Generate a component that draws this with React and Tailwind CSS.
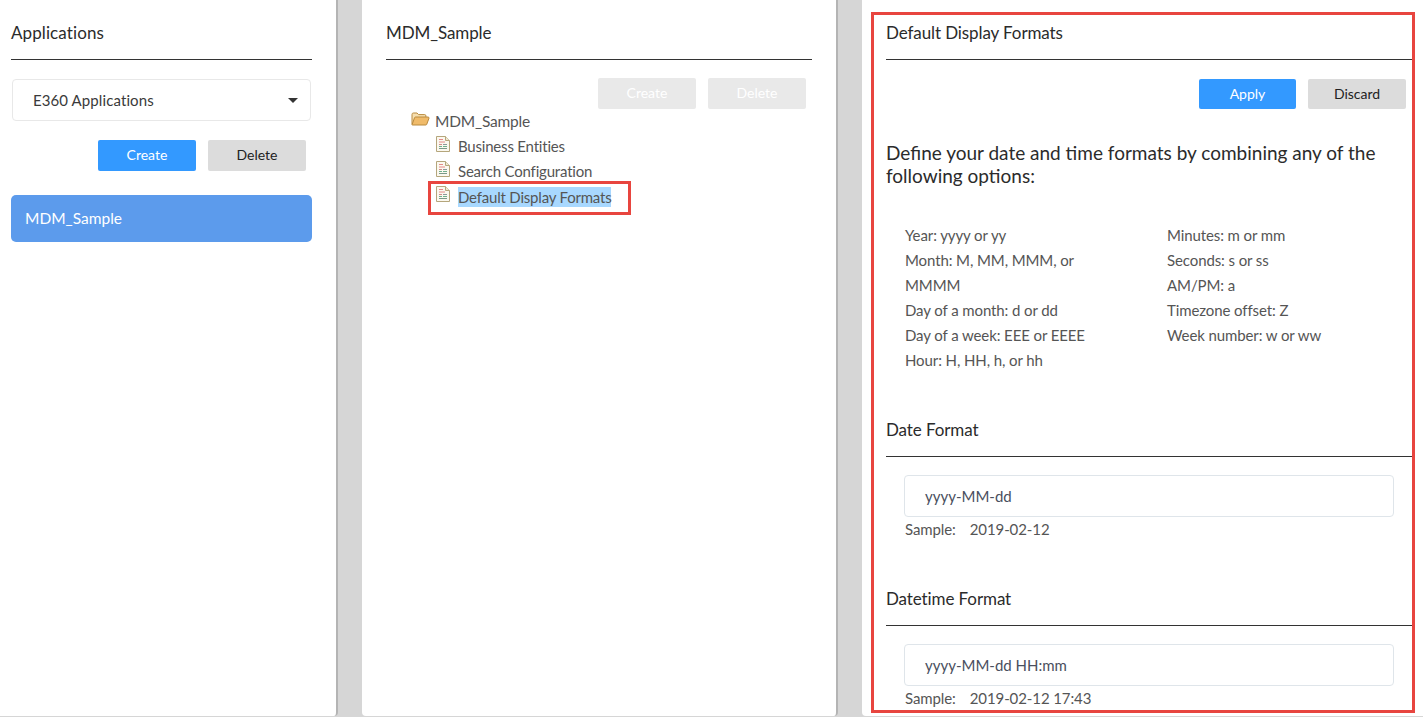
const font = "font-['Lato','Liberation_Sans',sans-serif]";

function FolderIcon() {
  return (
    <svg width="19" height="14" viewBox="0 0 19 14" className="shrink-0">
      <path d="M1 12.5V2.5C1 1.6 1.6 1 2.4 1H6l1.5 1.6h6.2c.7 0 1.2.5 1.2 1.2V5" fill="#f6dfb0" stroke="#b98a3e" strokeWidth="1" />
      <path d="M1 12.8 3.6 5.6c.2-.4.5-.6.9-.6h12.6c.7 0 1.1.6.9 1.2l-2.3 6.2c-.2.4-.5.6-.9.6H1.6z" fill="#f0bb6a" stroke="#b98a3e" strokeWidth="1" />
    </svg>
  );
}

function DocIcon() {
  return (
    <svg width="14" height="16" viewBox="0 0 14 16" className="shrink-0">
      <path d="M.5.5h9l4 4v11H.5z" fill="#fbf8ef" stroke="#b5a67c" strokeWidth="1" />
      <path d="M9.5.5v4h4" fill="#efe8d2" stroke="#b5a67c" strokeWidth="1" />
      <rect x="3" y="3" width="4" height="1" fill="#e58a8a" />
      <rect x="3" y="5.5" width="6" height="1" fill="#e58a8a" />
      <rect x="3" y="8" width="3" height="1" fill="#d08a8a" />
      <rect x="7" y="8" width="4" height="1" fill="#8a9a9a" />
      <rect x="3" y="10" width="3" height="1" fill="#6fae8c" />
      <rect x="7" y="10" width="4" height="1" fill="#6fae8c" />
      <rect x="3" y="12" width="8" height="1" fill="#7a9a8a" />
    </svg>
  );
}

function Btn({children, primary, disabled, size = 'w-[98px] h-[31px]'}) {
  const color = disabled
    ? 'bg-[#e9e9e9] text-white'
    : primary
      ? 'bg-[#3399ff] text-white'
      : 'bg-[#dcdcdc] text-[#222]';
  return (
    <button className={`pb-[2px] rounded-[2px] text-[14px] ${size} ${color}`}>{children}</button>
  );
}

function PanelTitle({children, spacing = 'tracking-[-0.1px]'}) {
  return (
    <div className={`h-[60px] flex items-center pt-[7px] border-b border-[#333] text-[17px] text-[#2b2b2b] ${spacing}`}>
      {children}
    </div>
  );
}

function TreeRow({children}) {
  return (
    <div className="h-[25px] flex items-center gap-[8px]">
      <div className="-mt-[5px]"><DocIcon /></div>
      {children}
    </div>
  );
}

function FormatField({title, value, sample}) {
  return (
    <div>
      <div className="h-[57px] flex items-end pb-[14px] border-b border-[#333] text-[17px] tracking-[-0.1px] text-[#2b2b2b]">{title}</div>
      <div className="pl-[18px] pr-[18px] pt-[18px]">
        <div className="h-[42px] flex items-center pl-[20px] border border-[#dfe5ea] rounded-[4px] text-[15px] text-[#4a4f5e]">{value}</div>
        <div className="h-[25px] ml-px flex items-center text-[15px] tracking-[-0.1px] text-[#555] gap-[14px]">
          <span>Sample:</span><span>{sample}</span>
        </div>
      </div>
    </div>
  );
}

export default function App() {
  const leftOptions = ['Year: yyyy or yy', 'Month: M, MM, MMM, or MMMM', 'Day of a month: d or dd', 'Day of a week: EEE or EEEE', 'Hour: H, HH, h, or hh'];
  const rightOptions = ['Minutes: m or mm', 'Seconds: s or ss', 'AM/PM: a', 'Timezone offset: Z', 'Week number: w or ww'];

  return (
    <div className={`${font} relative h-[717px] w-[1423px] overflow-hidden bg-[#d6d6d6] flex`}>
      {/* applications */}
      <div className="w-[338px] h-[716px] shrink-0 bg-white border-r-2 border-[#b4b4b4] rounded-br-[4px] pl-[11px] pr-[24px]">
        <PanelTitle spacing="tracking-[0.1px]">Applications</PanelTitle>
        <div className="mt-[19px] ml-px mr-px h-[42px] flex items-center justify-between pl-[20px] pr-[12px] border border-[#e8e8e8] rounded-[4px] text-[15px] tracking-[0.1px] text-[#3a3a3a]">
          E360 Applications
          <span className="w-0 h-0 border-x-[5px] border-x-transparent border-t-[5px] border-t-[#333]" />
        </div>
        <div className="mt-[19px] flex justify-end gap-[12px] pr-[6px]">
          <Btn primary>Create</Btn>
          <Btn>Delete</Btn>
        </div>
        <div className="mt-[24px] h-[47px] flex items-center pl-[14px] bg-[#5c9bec] rounded-[5px] text-[15.5px] text-white">MDM_Sample</div>
      </div>

      <div className="w-[24px] shrink-0" />

      {/* tree */}
      <div className="w-[476px] h-[716px] shrink-0 bg-white border-r-2 border-[#b4b4b4] rounded-b-[4px] pl-[24px] pr-[24px]">
        <PanelTitle>MDM_Sample</PanelTitle>
        <div className="mt-[18px] flex justify-end gap-[12px] pr-[6px]">
          <Btn disabled>Create</Btn>
          <Btn disabled>Delete</Btn>
        </div>
        <div className="pl-[25px] text-[15px] tracking-[-0.2px] text-[#555]">
          <div className="h-[25px] flex items-center gap-[5px] text-[15.5px]">
            <div className="-mt-[5px]"><FolderIcon /></div>
            MDM_Sample
          </div>
          <div className="pl-[26px] -ml-px">
            <TreeRow>Business Entities</TreeRow>
            <TreeRow>Search Configuration</TreeRow>
            <TreeRow><span className="bg-[#a8d8ff] leading-[20px]">Default Display Formats</span></TreeRow>
          </div>
        </div>
      </div>

      <div className="w-[24px] shrink-0" />

      {/* display formats */}
      <div className="flex-1 h-[716px] bg-white rounded-bl-[4px] pl-[24px] pr-[11px]">
        <PanelTitle>Default Display Formats</PanelTitle>
        <div className="mt-[19px] flex justify-end gap-[12px] pr-[6px]">
          <Btn primary size="w-[97px] h-[30px]">Apply</Btn>
          <Btn size="w-[98px] h-[30px]">Discard</Btn>
        </div>
        <div className="mt-[32px] pr-[10px] text-[19px] leading-[23px] text-[#2b2b2b]">
          Define your date and time formats by combining any of the following options:
        </div>
        <div className="mt-[36px] pl-[19px] flex text-[15px] tracking-[-0.1px] leading-[25px] text-[#555]">
          <div className="w-[262px] pr-[60px]">
            {leftOptions.map((o) => <div key={o}>{o}</div>)}
          </div>
          <div>
            {rightOptions.map((o) => <div key={o}>{o}</div>)}
          </div>
        </div>
        <div className="mt-[27px]">
          <FormatField title="Date Format" value="yyyy-MM-dd" sample="2019-02-12" />
        </div>
        <div className="mt-[27px]">
          <FormatField title="Datetime Format" value="yyyy-MM-dd HH:mm" sample="2019-02-12 17:43" />
        </div>
      </div>

      {/* callouts */}
      <div className="absolute left-[428px] top-[181px] w-[203px] h-[34px] border-[3px] border-[#e8453f]" />
      <div className="absolute left-[871px] top-[12px] w-[544px] h-[701px] border-[3px] border-[#e8453f]" />
    </div>
  );
}
